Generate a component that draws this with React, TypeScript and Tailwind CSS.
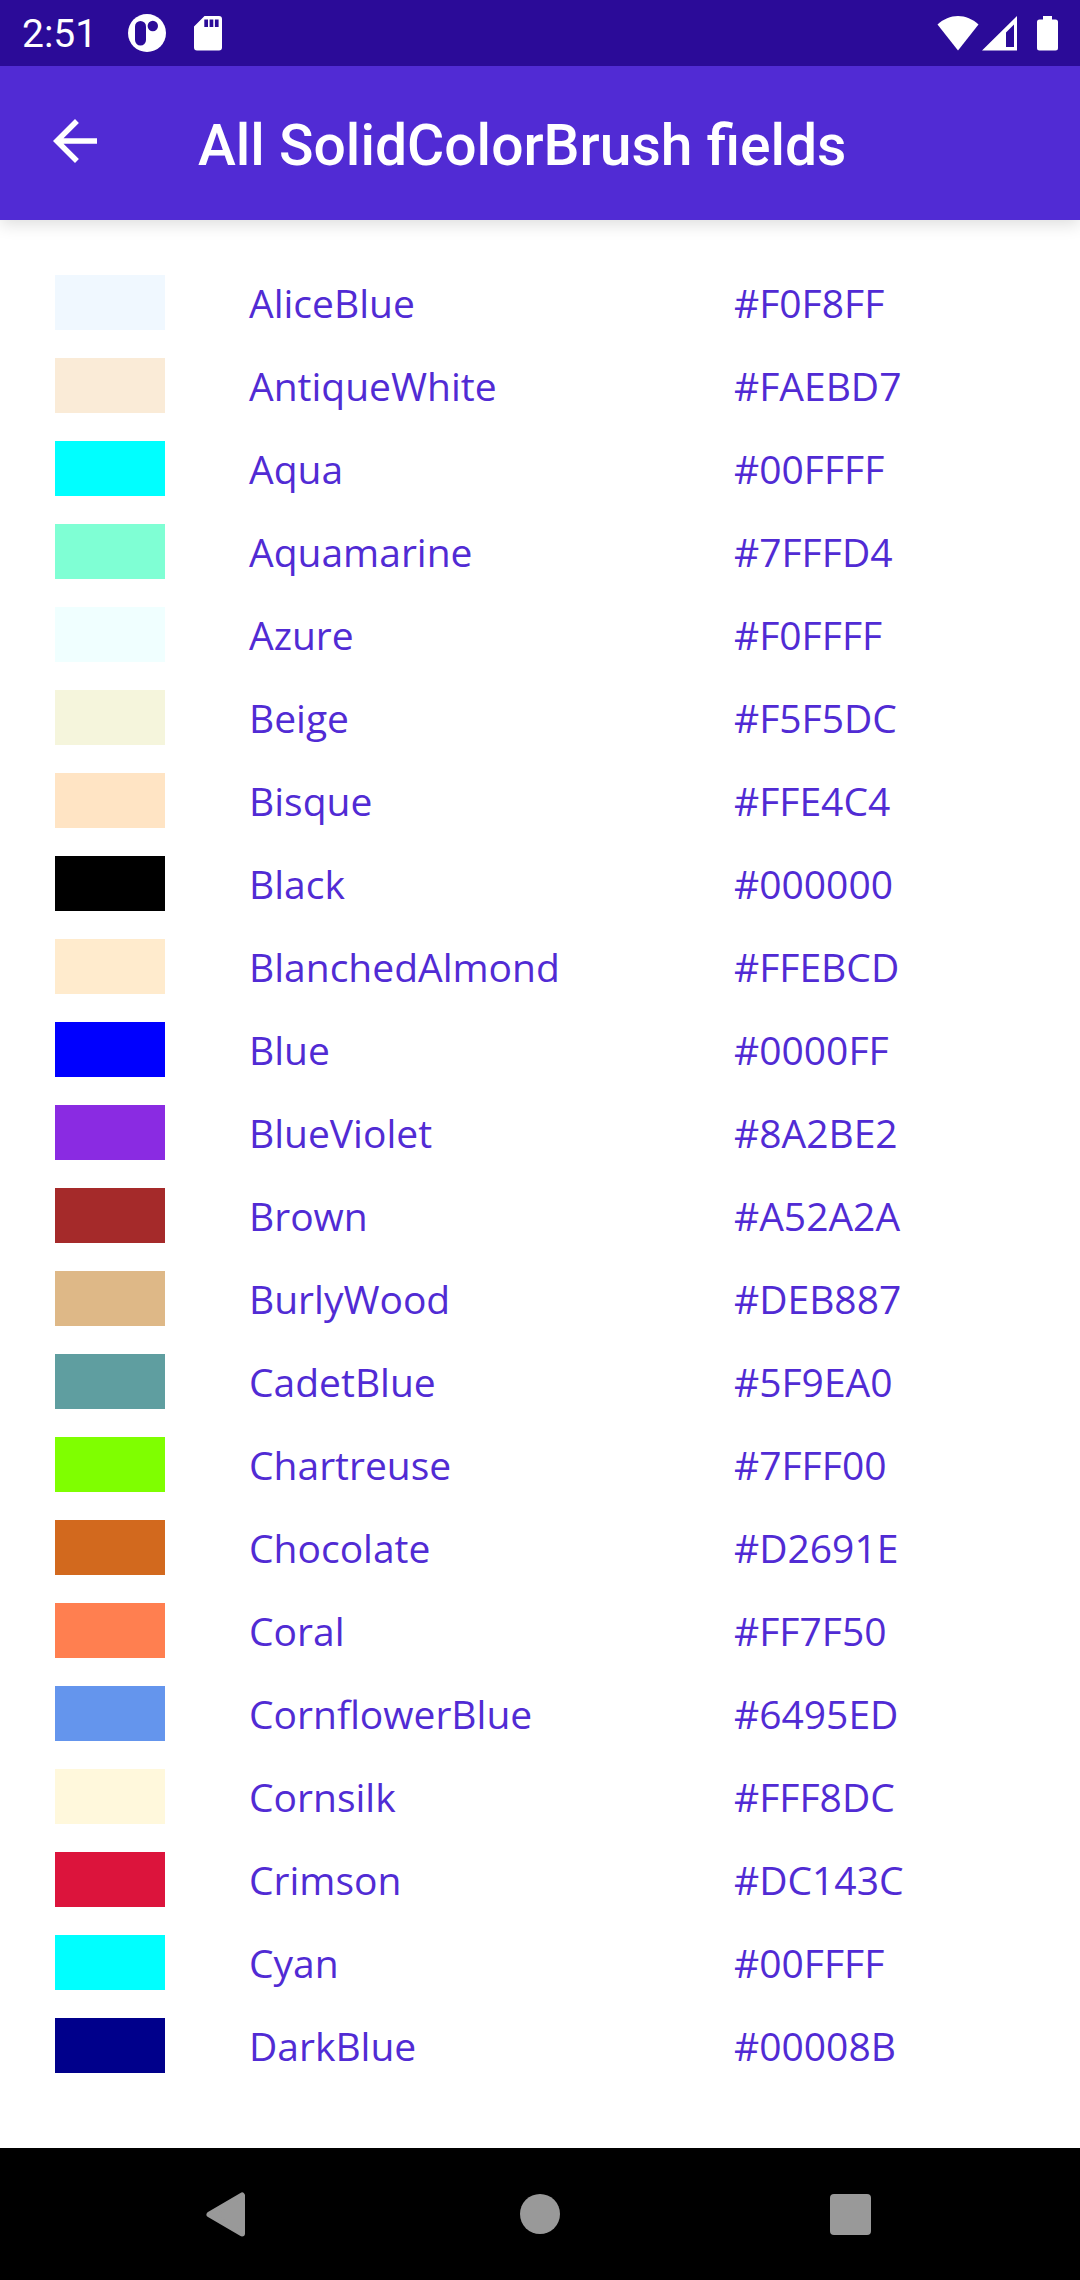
const colors = [
  ["AliceBlue", "#F0F8FF"],
  ["AntiqueWhite", "#FAEBD7"],
  ["Aqua", "#00FFFF"],
  ["Aquamarine", "#7FFFD4"],
  ["Azure", "#F0FFFF"],
  ["Beige", "#F5F5DC"],
  ["Bisque", "#FFE4C4"],
  ["Black", "#000000"],
  ["BlanchedAlmond", "#FFEBCD"],
  ["Blue", "#0000FF"],
  ["BlueViolet", "#8A2BE2"],
  ["Brown", "#A52A2A"],
  ["BurlyWood", "#DEB887"],
  ["CadetBlue", "#5F9EA0"],
  ["Chartreuse", "#7FFF00"],
  ["Chocolate", "#D2691E"],
  ["Coral", "#FF7F50"],
  ["CornflowerBlue", "#6495ED"],
  ["Cornsilk", "#FFF8DC"],
  ["Crimson", "#DC143C"],
  ["Cyan", "#00FFFF"],
  ["DarkBlue", "#00008B"],
];

function StatusBar() {
  return (
    <div className="relative z-10 flex h-[66px] items-center justify-between bg-[#2B0B98] px-[22px] text-white">
      <div className="flex items-center">
        <span className="mr-[30px] pt-0.5 text-[39px] leading-[60px]">2:51</span>
        <svg className="mr-[27px] size-10" viewBox="0 0 40 40" aria-hidden="true">
          <circle cx="20" cy="20" r="19" fill="#fff" />
          <rect x="8" y="8" width="11" height="24.500" rx="5.5" fill="#2B0B98" />
          <circle cx="25.800" cy="13" r="5.2" fill="#2B0B98" />
        </svg>
        <svg className="h-9 w-7" viewBox="0 0 28 36" aria-hidden="true">
          <path
            fillRule="evenodd"
            fill="#fff"
            d="M10.5 1H25a3 3 0 0 1 3 3v28.500a3 3 0 0 1-3 3H3a3 3 0 0 1-3-3V11.500zM10.300 4.500v7.500h3.700V4.500zm5.300 0v7.500h3.700V4.500zm5.300 0v7.500h3.700V4.500z"
          />
        </svg>
      </div>
      <div className="flex items-center">
        <svg className="mr-[3px] h-9 w-[42px]" viewBox="0 0 42 36" fill="#fff" aria-hidden="true">
          <path d="M21 35.500 0.500 9.500C6.500 4 13.500 1 21 1s14.500 3 20.500 8.500z" />
        </svg>
        <svg className="mr-5 h-9 w-[35px]" viewBox="0 0 35 36" fill="#fff" aria-hidden="true">
          <path fillRule="evenodd" d="M35 1v34.500H0zM32 9.500l-8 8V32h8z" />
        </svg>
        <svg className="h-9 w-[21px]" viewBox="0 0 21 36" fill="#fff" aria-hidden="true">
          <path d="M6 1h9v3.500h3.500A2.500 2.500 0 0 1 21 7v26a2.500 2.500 0 0 1-2.500 2.500h-16A2.500 2.500 0 0 1 0 33V7a2.500 2.500 0 0 1 2.500-2.500H6z" />
        </svg>
      </div>
    </div>
  );
}

function AppBar() {
  return (
    <header className="flex h-[154px] items-center bg-[#512BD4] pl-[42px] text-white shadow-[0_4px_16px_rgba(0,0,0,0.14)]">
      <button type="button" aria-label="Back" className="mb-1 mr-[90px]">
        <svg className="size-[66px]" viewBox="0 0 24 24" fill="currentColor" aria-hidden="true">
          <path d="M20 11H7.830l5.590-5.590L12 4l-8 8 8 8 1.410-1.410L7.830 13H20v-2z" />
        </svg>
      </button>
      <h1 className="pt-1.5 text-[57px] font-medium leading-[64px]">All SolidColorBrush fields</h1>
    </header>
  );
}

function NavBar() {
  return (
    <nav className="grid h-[132px] grid-cols-3 items-center bg-black px-[70px]">
      <button type="button" aria-label="Back" className="flex justify-center">
        <svg className="size-[76px]" viewBox="0 0 76 76" aria-hidden="true">
          <path
            d="M20.500 38.500 53 19.500v38z"
            fill="#999"
            stroke="#999"
            strokeWidth="6"
            strokeLinejoin="round"
          />
        </svg>
      </button>
      <button type="button" aria-label="Home" className="flex justify-center">
        <svg className="size-[76px]" viewBox="0 0 76 76" aria-hidden="true">
          <circle cx="38" cy="38" r="20" fill="#999" />
        </svg>
      </button>
      <button type="button" aria-label="Recent apps" className="flex justify-center">
        <svg className="size-[76px]" viewBox="0 0 76 76" aria-hidden="true">
          <rect x="15" y="18" width="41" height="41" rx="4" fill="#999" />
        </svg>
      </button>
    </nav>
  );
}

export default function App() {
  return (
    <div className="flex min-h-screen flex-col bg-white font-[Roboto,sans-serif]">
      <StatusBar />
      <AppBar />
      <main className="flex-1 px-[55px] pt-[55px]">
        <table className="w-full table-fixed text-left font-['Open_Sans',sans-serif] text-[39px] leading-[55px] text-[#512BD4]">
          <colgroup>
            <col className="w-[20%]" />
            <col className="w-[50%]" />
            <col className="w-[30%]" />
          </colgroup>
          <tbody>
            {colors.map(([name, hex]) => (
              <tr key={name}>
                <td className="pb-7">
                  <div className="h-[55px] w-[110px]" style={{ backgroundColor: hex }} />
                </td>
                <th scope="row" className="pb-7 font-normal">{name}</th>
                <td className="pb-7">{hex}</td>
              </tr>
            ))}
          </tbody>
        </table>
      </main>
      <NavBar />
    </div>
  );
}
